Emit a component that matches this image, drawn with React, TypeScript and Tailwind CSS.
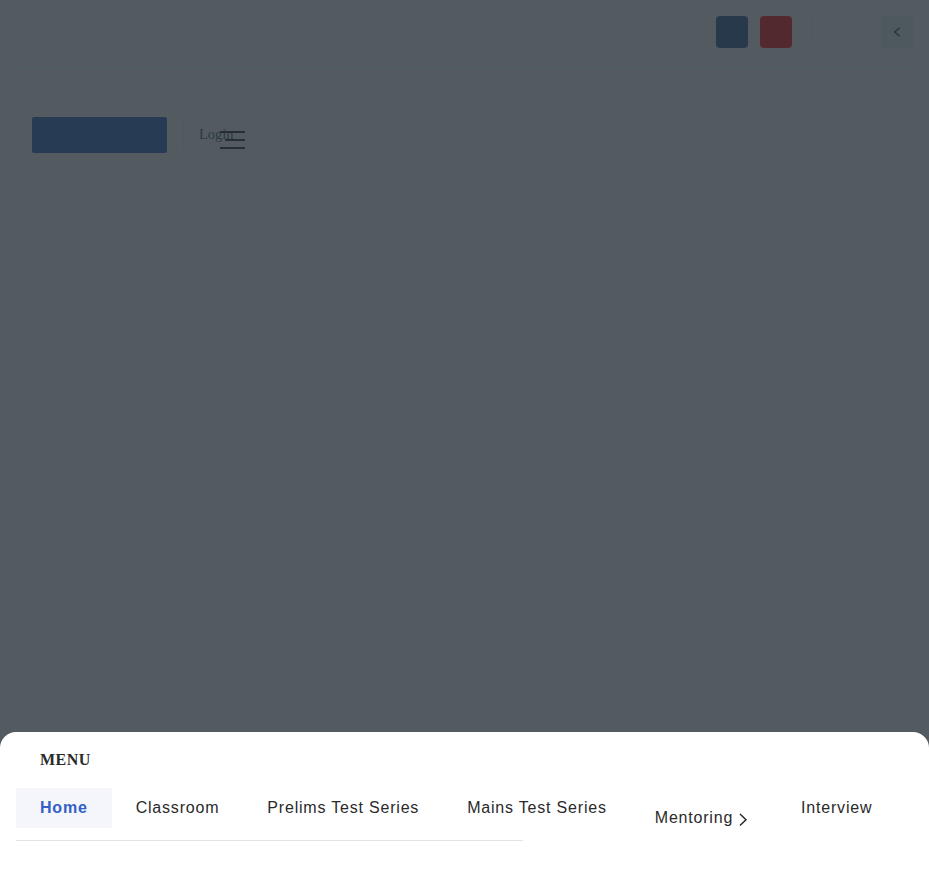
import React from 'react';

const linkClass = 'px-6 h-10 leading-[40px] whitespace-nowrap';

export default function App() {
  return (
    <div className="flex h-[873px] w-[929px] flex-col overflow-hidden bg-[#535b61] font-['Liberation_Serif',serif]">
      <header className="mx-4 flex h-[69px] items-start justify-end border-b border-[#4b5c62] pt-4">
        <div className="h-8 w-8 rounded-[4px] bg-[#29394c]" />
        <div className="ml-3 h-8 w-8 rounded-[4px] bg-[#51292e]" />
        <div className="ml-5 h-7 w-px bg-[#4a5b60]" />
        <button className="ml-[68px] flex h-8 w-8 items-center justify-center rounded-[2px] bg-[#4d595e]">
          <svg width="8" height="10" viewBox="0 0 8 10" fill="none" stroke="#263238" strokeWidth="1.2">
            <path d="M6.7 0.8 1.5 5l5.2 4.2" />
          </svg>
        </button>
      </header>

      <div className="ml-8 mt-12 flex h-9 items-start">
        <div className="h-9 w-[135px] rounded-[2px] bg-[#283b54]" />
        <div className="ml-4 mt-1 h-7 w-px bg-[#4a5b60]" />
        <div className="relative ml-[15px] h-9 w-[46px]">
          <span className="block text-[14.4px] leading-[35px] text-[#293a3f]">Login</span>
          <div className="absolute left-[21px] top-[14px] flex w-[25px] flex-col items-end gap-[6px]">
            <div className="h-[2px] w-[25px] bg-[#262f37]" />
            <div className="h-[2px] w-5 bg-[#262f37]" />
            <div className="h-[2px] w-[25px] bg-[#262f37]" />
          </div>
        </div>
      </div>

      <section className="mt-auto h-[141px] rounded-t-[16px] bg-white text-base tracking-[0.8px] text-[#2a2a2a]">
        <h2 className="pl-10 pt-4 font-bold leading-6 tracking-[0.5px]">MENU</h2>
        <nav className="ml-4 mt-4 flex h-[52px] items-start font-['Liberation_Sans',sans-serif]">
          <a className={linkClass + ' bg-[#f4f6fc] font-bold text-[#335fc6]'}>Home</a>
          <a className={linkClass}>Classroom</a>
          <a className={linkClass}>Prelims Test Series</a>
          <a className={linkClass}>Mains Test Series</a>
          <a className={linkClass + ' mt-[10px] flex'}>
            Mentoring
            <svg className="mt-[11px]" width="20" height="20" viewBox="0 0 20 20" fill="none" stroke="#222" strokeWidth="1.4">
              <path d="m7 5 6 5.7-6 5.7" />
            </svg>
          </a>
          <a className={linkClass}>Interview</a>
        </nav>
        <div className="ml-4 h-px w-[507px] bg-[#e3e4e7]" />
      </section>
    </div>
  );
}
